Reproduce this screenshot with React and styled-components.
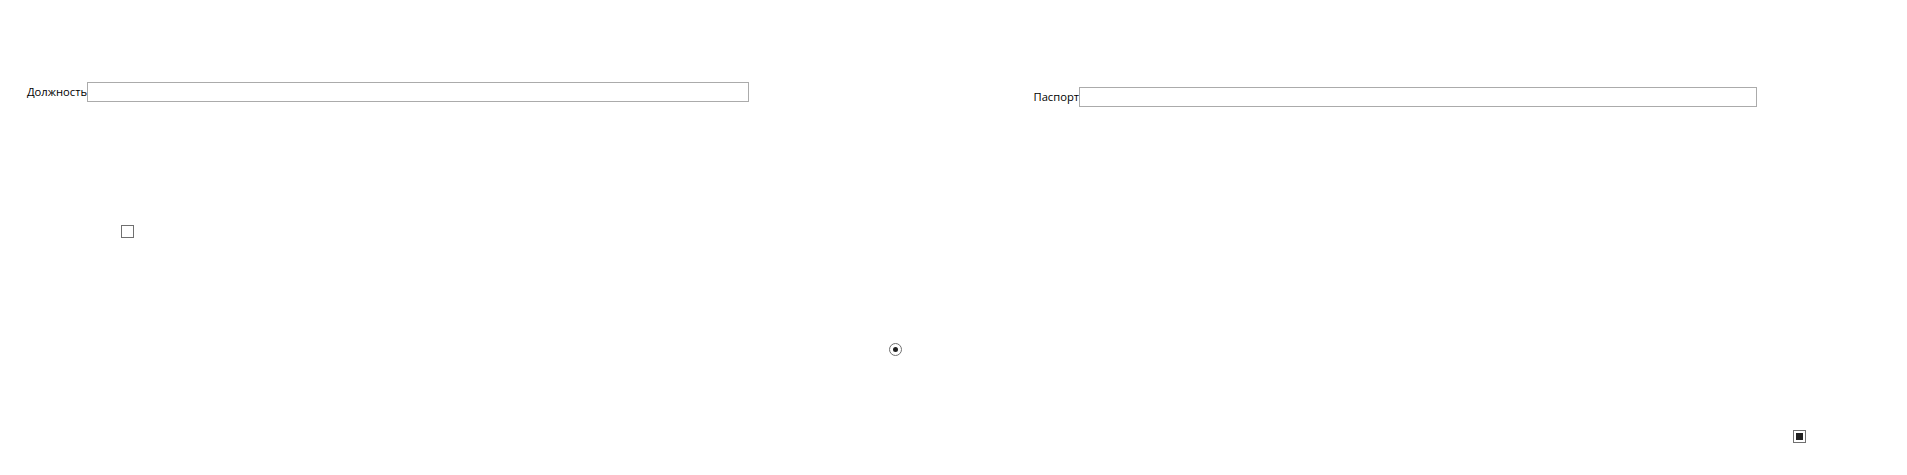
import React from "react";
import styled, { createGlobalStyle } from "styled-components";

const Global = createGlobalStyle`
  html, body { margin: 0; padding: 0; background: #ffffff; }
  body { font-family: "Segoe UI", "Open Sans", "Noto Sans", sans-serif; font-size: 12px; color: #000; }
`;

const Page = styled.div`
  width: 1907px;
  height: 475px;
  display: flex;
  flex-direction: column;
  overflow: hidden;
`;

const Row = styled.div`
  display: flex;
  align-items: flex-start;
  margin-top: ${(p) => p.$top}px;
  padding-left: ${(p) => p.$left || 0}px;
  height: ${(p) => p.$h}px;
`;

const Field = styled.div`
  display: flex;
  align-items: center;
  margin-top: ${(p) => p.$offset || 0}px;
  margin-left: ${(p) => p.$left || 0}px;
`;

const Label = styled.span`
  font-family: "Segoe UI", "Open Sans", "Noto Sans", sans-serif;
  font-size: 11.2px;
  line-height: 16px;
  color: #000;
  white-space: nowrap;
  display: flex;
  justify-content: flex-end;
  width: ${(p) => p.$w}px;
`;

const TextInput = styled.input`
  box-sizing: border-box;
  width: ${(p) => p.$w}px;
  height: 20px;
  margin: 0;
  padding: 0 2px;
  border: 1px solid #ababab;
  background: #fff;
  font: inherit;
  outline: none;
`;

const Check = styled.span`
  box-sizing: border-box;
  display: inline-flex;
  align-items: center;
  justify-content: center;
  width: 13px;
  height: 13px;
  border: 1px solid #707070;
  background: #fff;
  &::after {
    content: "";
    display: ${(p) => (p.$checked ? "block" : "none")};
    width: 7px;
    height: 7px;
    background: #212121;
  }
`;

const Radio = styled.span`
  box-sizing: border-box;
  display: inline-flex;
  align-items: center;
  justify-content: center;
  width: 13px;
  height: 13px;
  border-radius: 50%;
  border: 1px solid #707070;
  background: #fff;
  &::after {
    content: "";
    width: 5px;
    height: 5px;
    border-radius: 50%;
    background: #212121;
  }
`;

export default function App() {
  return (
    <>
      <Global />
      <Page>
        <Row $top={82} $h={25}>
          <Field $left={26}>
            <Label $w={61}>Должность</Label>
            <TextInput $w={662} />
          </Field>
          <Field $offset={5} $left={284}>
            <Label $w={46}>Паспорт</Label>
            <TextInput $w={678} />
          </Field>
        </Row>
        <Row $top={118} $left={121} $h={13}>
          <Check role="checkbox" aria-checked="false" />
        </Row>
        <Row $top={105} $left={889} $h={13}>
          <Radio role="radio" aria-checked="true" />
        </Row>
        <Row $top={74} $left={1793} $h={13}>
          <Check $checked role="checkbox" aria-checked="true" />
        </Row>
      </Page>
    </>
  );
}
